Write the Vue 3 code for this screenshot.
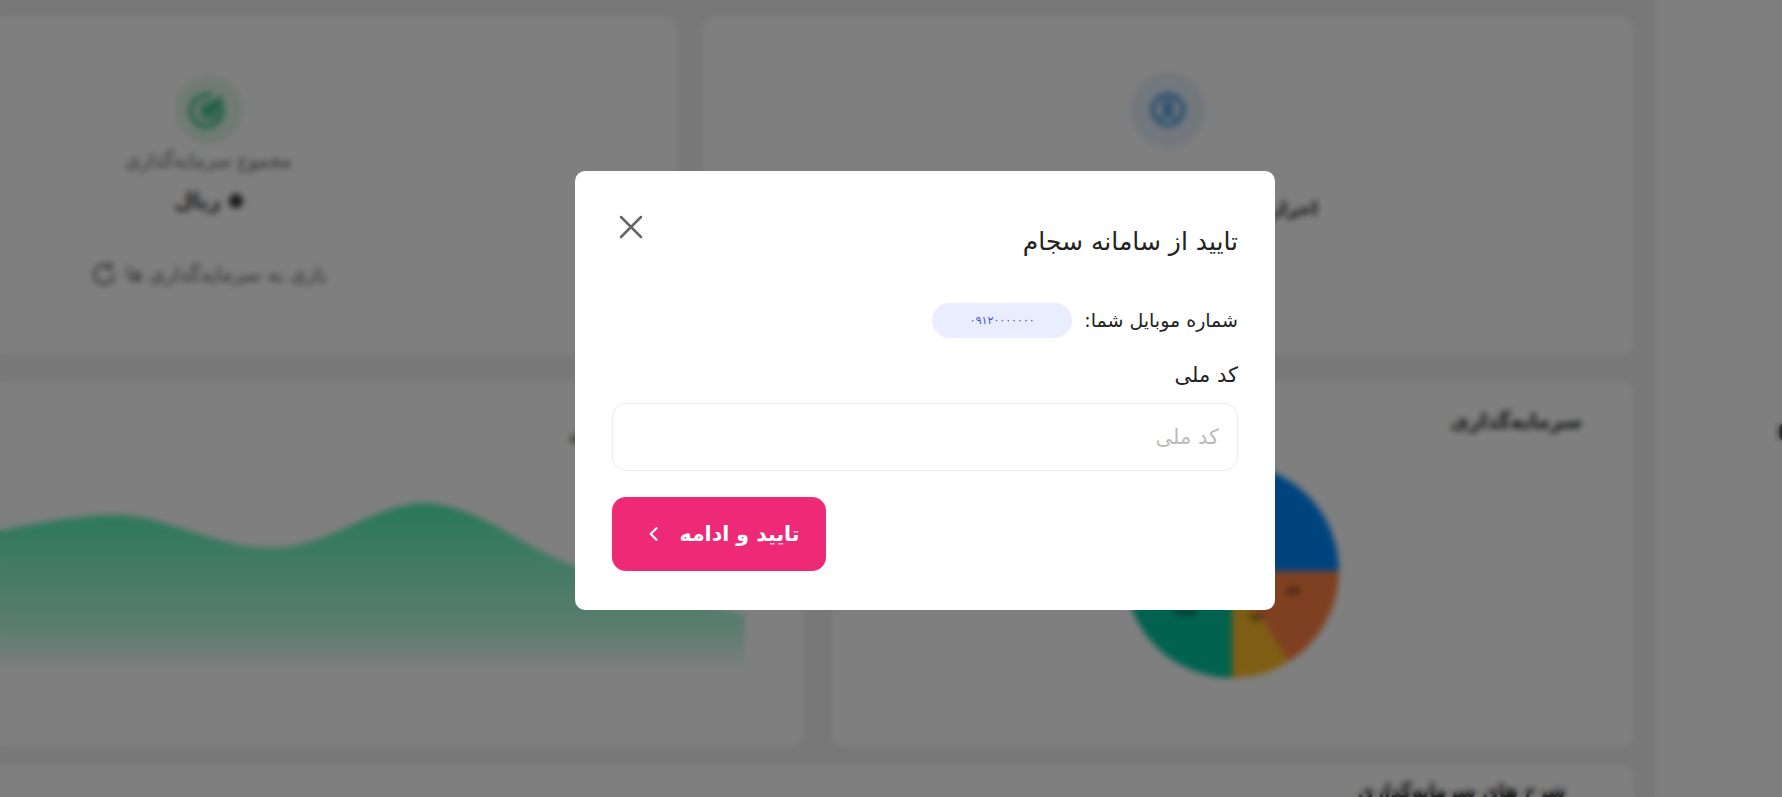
<script setup>
const areaLine = 'M-20 535 C 30 525, 70 516, 114 515 C 170 514, 220 550, 278 548 C 330 546, 380 503, 426 503 C 480 505, 520 545, 574 565 C 630 585, 690 600, 747 615 L747 674 L-20 674 Z'

function polar(deg, r = 107) {
  const a = (deg - 90) * Math.PI / 180
  return [108 + r * Math.cos(a), 108 + r * Math.sin(a)]
}
function slice(from, to) {
  const [x1, y1] = polar(from)
  const [x2, y2] = polar(to)
  return `M108 108 L${x1} ${y1} A107 107 0 ${to - from > 180 ? 1 : 0} 1 ${x2} ${y2} Z`
}
const slices = [
  { d: slice(0, 90), fill: '#0088FE' },
  { d: slice(90, 148), fill: '#FF8042' },
  { d: slice(148, 180), fill: '#FFBB28' },
  { d: slice(180, 360), fill: '#00C49F' }
]
</script>

<template>
  <div class="page" dir="rtl">
    <aside class="sidebar"><span class="side-mark"></span></aside>
    <main class="main">
      <section class="row row-top">
        <div class="card stat stat-wide">
          <div class="halo halo-blue">
            <svg viewBox="0 0 24 24" width="38" height="38" fill="none" stroke="#1d7fd6" stroke-width="2.2">
              <circle cx="12" cy="12" r="9.5" />
              <circle cx="12" cy="9.5" r="2.6" />
              <path d="M7.5 17c2-2.6 7-2.6 9 0" />
            </svg>
          </div>
          <p class="auth-text">احراز هویت شما انجام نشده است</p>
        </div>
        <div class="card stat stat-narrow">
          <div class="halo halo-green">
            <svg viewBox="0 0 24 24" width="42" height="42" fill="none" stroke="#1fb573" stroke-width="2">
              <path d="M18.5 8a9 9 0 1 1-4.5-4" />
              <circle cx="12" cy="12.5" r="4.6" stroke-width="1.6" />
              <path d="M12 13 19 4.5" stroke-width="2.6" />
              <circle cx="12" cy="12.5" r="1.6" fill="#1fb573" />
            </svg>
          </div>
          <p class="stat-label">مجموع سرمایه‌گذاری</p>
          <p class="stat-value"><span class="dot"></span>ریال</p>
          <button class="ghost-btn">
            بازی به سرمایه‌گذاری ها
            <svg viewBox="0 0 24 24" width="28" height="28" fill="none" stroke="#555" stroke-width="2">
              <path d="M18 7a8 8 0 1 0 2 5" />
              <path d="M18 3v4h-4" />
            </svg>
          </button>
        </div>
      </section>

      <section class="row row-mid">
        <div class="card pie-card">
          <h3 class="card-title">سرمایه‌گذاری</h3>
          <svg class="pie" viewBox="0 0 216 216" width="216" height="216">
            <path v-for="(s, i) in slices" :key="i" :d="s.d" :fill="s.fill" />
            <text x="169" y="132" class="pie-label">۸۷</text>
            <text x="132" y="159" class="pie-label">۹۲</text>
            <text x="61" y="152" class="pie-label">۷۵۵</text>
          </svg>
        </div>
        <div class="card area-card">
          <h3 class="card-title">روند رشد سرمایه‌گذاری</h3>
          <svg class="area" viewBox="0 0 805 366" width="805" height="366">
            <defs>
              <linearGradient id="areaFill" x1="0" y1="0" x2="0" y2="1">
                <stop offset="0" stop-color="#4ff0b4" stop-opacity="1" />
                <stop offset="0.38" stop-color="#4ff0b4" stop-opacity="0.68" />
                <stop offset="0.72" stop-color="#4ff0b4" stop-opacity="0.42" />
                <stop offset="1" stop-color="#4ff0b4" stop-opacity="0" />
              </linearGradient>
            </defs>
            <path :d="areaLine" transform="translate(0 -381)" fill="url(#areaFill)" />
          </svg>
        </div>
      </section>

      <section class="row row-bottom">
        <div class="card table-card">
          <h3 class="card-title">شرح های سرمایه‌گذاری</h3>
        </div>
      </section>
    </main>

    <div class="overlay" dir="rtl">
      <div class="modal">
        <div class="modal-head">
          <h2 class="modal-title">تایید از سامانه سجام</h2>
          <button class="close" aria-label="close">
            <svg viewBox="0 0 24 24" width="30" height="30" fill="none" stroke="#666" stroke-width="2" stroke-linecap="round">
              <path d="M4 4 20 20M20 4 4 20" />
            </svg>
          </button>
        </div>
        <div class="phone-row">
          <span class="phone-label">شماره موبایل شما:</span>
          <span class="phone-pill">۰۹۱۲۰۰۰۰۰۰۰</span>
        </div>
        <label class="field-label" for="nid">کد ملی</label>
        <input id="nid" class="field" placeholder="کد ملی" />
        <button class="submit">
          تایید و ادامه
          <svg viewBox="0 0 24 24" width="20" height="20" fill="none" stroke="#fff" stroke-width="2.6" stroke-linecap="round" stroke-linejoin="round">
            <path d="M15 5 8 12l7 7" />
          </svg>
        </button>
      </div>
    </div>
  </div>
</template>

<style>
html, body { margin: 0; background: #f0f0f0; }
</style>

<style scoped>
.page {
  width: 1782px;
  height: 797px;
  overflow: hidden;
  display: flex;
  background: #f0f0f0;
  font-family: "DejaVu Sans", "Noto Sans", sans-serif;
  color: #222;
}
.sidebar {
  width: 127px;
  flex: none;
  height: 797px;
  background: #fff;
  padding-top: 424px;
  box-sizing: border-box;
  overflow: hidden;
  margin-left: 21px;
}
.side-mark {
  display: block;
  width: 12px;
  height: 16px;
  margin-right: -9px;
  border-radius: 4px;
  background: #222;
}
.main {
  flex: none;
  width: 1700px;
  display: flex;
  flex-direction: column;
  gap: 26px;
  padding-top: 17px;
  box-sizing: border-box;
}
.row { display: flex; gap: 25px; flex: none; }
.row-top { height: 338px; }
.row-mid { height: 366px; gap: 29px; }
.row-bottom { height: 120px; margin-top: -9px; }
.card {
  background: #fff;
  border-radius: 14px;
  flex: none;
  position: relative;
  box-sizing: border-box;
}
.stat { display: flex; flex-direction: column; align-items: center; padding-top: 59px; }
.stat-wide { width: 932px; }
.stat-narrow { width: 744px; margin-left: -1px; padding-right: 193px; }
.halo {
  width: 68px; height: 68px; border-radius: 50%;
  display: flex; align-items: center; justify-content: center;
  flex: none;
}
.halo-blue { width: 76px; height: 76px; margin-top: -4px; background: #e6f0fb; }
.halo-green { background: #e0f7ec; }
.auth-text {
  margin: 46px 0 0; font-size: 18px; line-height: 30px; font-weight: 700; white-space: nowrap; color: #222;
}
.stat-label { margin: 4px 0 0; font-size: 19px; line-height: 24px; color: #666; white-space: nowrap; }
.stat-value {
  margin: 15px 0 0; font-size: 21px; line-height: 28px; font-weight: 700; color: #333;
  display: flex; align-items: center; gap: 8px; white-space: nowrap;
}
.dot { order: -1; width: 14px; height: 14px; background: #333; border-radius: 50%; }
.ghost-btn {
  margin-top: 34px;
  width: 286px; height: 50px;
  background: #fff;
  border: 1px solid #eee;
  border-radius: 10px;
  font: inherit; font-size: 20px; color: #666;
  display: flex; align-items: center; justify-content: center; gap: 8px;
  white-space: nowrap;
  padding: 0;
}
.pie-card { width: 802px; }
.area-card { width: 900px; }
.table-card { width: 1700px; }
.card-title {
  margin: 0;
  font-size: 20px;
  font-weight: 700;
  color: #222;
  padding: 28px 52px 0 0;
  white-space: nowrap;
}
.area-card .card-title { font-size: 18.5px; padding: 42px 20px 0 0; }
.table-card .card-title { font-size: 18px; padding: 16px 68px 0 0; }
.pie { position: absolute; top: 82px; left: 292px; }
.pie-label { font-size: 13px; fill: #111; text-anchor: middle; }
.area { position: absolute; right: 0; top: 0; direction: ltr; }
.overlay {
  position: fixed;
  inset: 0;
  background: rgba(0, 0, 0, 0.5);
  backdrop-filter: blur(3px);
  display: flex;
  align-items: flex-start;
  justify-content: flex-start;
  padding: 171px 507px 0 0;
  box-sizing: border-box;
}
.modal {
  width: 700px;
  height: 439px;
  background: #fff;
  border-radius: 10px;
  padding: 0 37px;
  box-sizing: border-box;
  display: flex;
  flex-direction: column;
  align-items: stretch;
}
.modal-head {
  display: flex;
  justify-content: space-between;
  align-items: flex-start;
  height: 131px;
  flex: none;
}
.modal-title {
  margin: 56px 0 0;
  font-size: 25px;
  font-weight: 400;
  color: #222;
  white-space: nowrap;
}
.close {
  border: 0; background: none; padding: 0; margin: 41px 0 0 4px;
  width: 30px; height: 30px;
  cursor: pointer;
}
.phone-row { display: flex; align-items: center; gap: 12px; height: 36px; flex: none; }
.phone-label { font-size: 19px; color: #222; white-space: nowrap; }
.phone-pill {
  width: 140px; height: 35px; border-radius: 18px;
  background: #e9edfd; color: #3a50d0;
  font-size: 11px; display: flex; align-items: center; justify-content: center;
}
.field-label { margin-top: 24px; font-size: 21px; color: #222; line-height: 26px; }
.field {
  margin-top: 15px;
  height: 68px;
  border: 1.5px solid #ececec;
  border-radius: 14px;
  box-sizing: border-box;
  padding: 0 18px;
  font: inherit;
  font-size: 21px;
  outline: none;
  background: #fff;
}
.field::placeholder { color: #bbb; }
.submit {
  margin-top: 26px;
  width: 214px;
  height: 74px;
  border: 0;
  border-radius: 14px;
  background: #ee2a78;
  color: #fff;
  font: inherit;
  font-size: 20.5px;
  font-weight: 700;
  display: flex;
  align-items: center;
  justify-content: center;
  gap: 15px;
  padding: 0 0 0 6px;
  align-self: flex-end;
  cursor: pointer;
}
</style>
